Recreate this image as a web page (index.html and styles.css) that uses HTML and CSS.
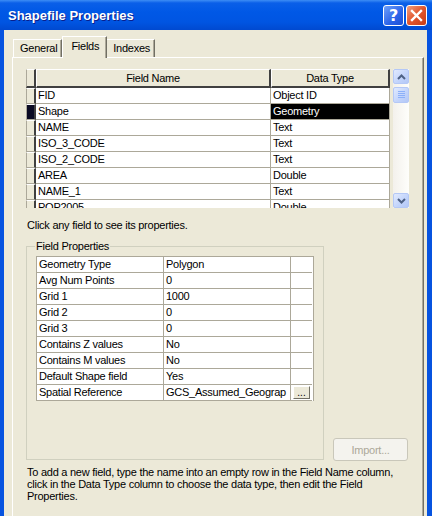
FILE: index.html
```html
<!DOCTYPE html>
<html lang="en">
<head>
<meta charset="UTF-8">
<title>Shapefile Properties</title>
<link rel="stylesheet" href="styles.css">
</head>
<body>
<div class="window">
  <div class="titlebar">
    <span class="title">Shapefile Properties</span>
    <div class="caption-btns">
      <span class="cbtn help">?</span>
      <span class="cbtn close">
        <svg width="13" height="13" viewBox="0 0 13 13"><path d="M2 2 L11 11 M11 2 L2 11" stroke="#fff" stroke-width="2.4" stroke-linecap="square"/></svg>
      </span>
    </div>
  </div>
  <div class="client">
    <div class="tabs">
      <span class="tab">General</span>
      <span class="tab active">Fields</span>
      <span class="tab">Indexes</span>
    </div>
    <div class="panel">
      <div class="fields">
        <div class="grid">
          <div class="grow head">
            <span class="rh"></span>
            <span class="hc name">Field Name</span>
            <span class="hc type">Data Type</span>
          </div>
          <div class="grow"><span class="rh"></span><span class="c name">FID</span><span class="c type">Object ID</span></div>
          <div class="grow sel"><span class="rh"></span><span class="c name">Shape</span><span class="c type">Geometry</span></div>
          <div class="grow"><span class="rh"></span><span class="c name">NAME</span><span class="c type">Text</span></div>
          <div class="grow"><span class="rh"></span><span class="c name">ISO_3_CODE</span><span class="c type">Text</span></div>
          <div class="grow"><span class="rh"></span><span class="c name">ISO_2_CODE</span><span class="c type">Text</span></div>
          <div class="grow"><span class="rh"></span><span class="c name">AREA</span><span class="c type">Double</span></div>
          <div class="grow"><span class="rh"></span><span class="c name">NAME_1</span><span class="c type">Text</span></div>
          <div class="grow"><span class="rh"></span><span class="c name">POP2005</span><span class="c type">Double</span></div>
        </div>
        <div class="vscroll">
          <span class="sbtn">
            <svg width="9" height="6" viewBox="0 0 9 6"><path d="M1 5 L4.5 1.5 L8 5" fill="none" stroke="#4D6185" stroke-width="2"/></svg>
          </span>
          <span class="thumb">
            <svg width="7" height="8" viewBox="0 0 7 8"><path d="M0 0.5H7M0 2.5H7M0 4.5H7M0 6.5H7" stroke="#8CB0F8" stroke-width="1"/></svg>
          </span>
          <span class="track"></span>
          <span class="sbtn">
            <svg width="9" height="6" viewBox="0 0 9 6"><path d="M1 1 L4.5 4.5 L8 1" fill="none" stroke="#4D6185" stroke-width="2"/></svg>
          </span>
        </div>
      </div>
      <p class="hint">Click any field to see its properties.</p>
      <div class="props-row">
        <fieldset class="group">
          <legend>Field Properties</legend>
          <div class="props">
            <div class="prow"><span class="pc pname">Geometry Type</span><span class="pc pval">Polygon</span><span class="pc pbtn"></span></div>
            <div class="prow"><span class="pc pname">Avg Num Points</span><span class="pc pval">0</span><span class="pc pbtn"></span></div>
            <div class="prow"><span class="pc pname">Grid 1</span><span class="pc pval">1000</span><span class="pc pbtn"></span></div>
            <div class="prow"><span class="pc pname">Grid 2</span><span class="pc pval">0</span><span class="pc pbtn"></span></div>
            <div class="prow"><span class="pc pname">Grid 3</span><span class="pc pval">0</span><span class="pc pbtn"></span></div>
            <div class="prow"><span class="pc pname">Contains Z values</span><span class="pc pval">No</span><span class="pc pbtn"></span></div>
            <div class="prow"><span class="pc pname">Contains M values</span><span class="pc pval">No</span><span class="pc pbtn"></span></div>
            <div class="prow"><span class="pc pname">Default Shape field</span><span class="pc pval">Yes</span><span class="pc pbtn"></span></div>
            <div class="prow"><span class="pc pname">Spatial Reference</span><span class="pc pval">GCS_Assumed_Geograp</span><span class="pc pbtn"><span class="dots">...</span></span></div>
          </div>
        </fieldset>
        <button class="import" disabled>Import...</button>
      </div>
      <p class="note">To add a new field, type the name into an empty row in the Field Name column, click in the Data Type column to choose the data type, then edit the Field Properties.</p>
    </div>
  </div>
</div>
</body>
</html>
```

FILE: styles.css
```css
body { margin: 0; font-family: "Liberation Sans", Arial, sans-serif; font-size: 11px; letter-spacing: -0.25px; color: #000; }

.window { width: 432px; height: 516px; display: flex; flex-direction: column; background: #0653E0; overflow: hidden; }

.titlebar { height: 30px; flex: none; display: flex; align-items: center; justify-content: space-between; padding: 0 5px 0 8px;
  background: linear-gradient(#3D8DF5 0, #0A5FE8 3px, #0058E6 12px, #0055E2 22px, #0049D0 30px); }
.title { color: #fff; font-weight: bold; font-size: 13px; letter-spacing: 0; text-shadow: 1px 1px 0 #0A1E8C; padding-top: 1px; }
.caption-btns { display: flex; gap: 2px; padding-top: 1px; }
.cbtn { width: 19px; height: 19px; border: 1px solid #fff; border-radius: 3px; display: flex; align-items: center; justify-content: center; }
.help { background: linear-gradient(135deg, #6FA0FA, #2A63E8 60%, #1E4FD5); color: #fff; font: bold 16px "DejaVu Sans", sans-serif; }
.close { background: linear-gradient(135deg, #F0A080, #E2552C 50%, #C63C16); }

.client { flex: 1; background: #ECE9D8; margin: 0 5px 0 4px; padding: 6px 3px 0 8px; display: flex; flex-direction: column; }

.tabs { display: flex; align-items: flex-end; height: 21px; padding-left: 1px; }
.tab { height: 17px; padding: 0 4px 0 6px; line-height: 17px; border: 1px solid #fff; border-bottom: none; border-right: 1px solid #716F64;
  box-shadow: inset -1px 0 0 #ACA899; background: #ECE9D8; }
.tab.active { height: 21px; line-height: 19px; margin: 0 -1px -1px 0; padding: 0 7px 0 8px; position: relative; z-index: 1; }

.panel { flex: 1; border: 1px solid #fff; border-right-color: #716F64; border-bottom: none; box-shadow: inset -1px 0 0 #ACA899;
  padding: 11px 0 0 13px; }

.fields { display: flex; gap: 3px; height: 139px; }
.grid { width: 364px; height: 139px; overflow: hidden; background: #fff; }
.grow { display: flex; height: 16px; }
.rh { width: 10px; flex: none; box-sizing: border-box; background: #ECE9D8; border-left: 1px solid #ACA899; border-top: 1px solid #fff;
  border-right: 2px solid #404040; border-bottom: 1px solid #ACA899; }
.grow.head { height: 19px; }
.grow.head .rh { border-bottom: 2px solid #404040; }
.hc { box-sizing: border-box; background: #ECE9D8; border-top: 1px solid #fff; border-left: 1px solid #fff; border-right: 2px solid #404040;
  border-bottom: 2px solid #404040; text-align: center; line-height: 16px; }
.c { box-sizing: border-box; border-right: 1px solid #ACA899; border-bottom: 1px solid #ACA899; padding-left: 2px; line-height: 15px; white-space: nowrap; }
.name { width: 235px; }
.type { width: 119px; }
.sel .rh { background: #0B0B24; }
.sel .type { background: #000; color: #fff; }

.vscroll { width: 16px; display: flex; flex-direction: column; background: linear-gradient(90deg, #F3F1EC, #FEFEFB); }
.sbtn, .thumb { box-sizing: border-box; height: 15px; border: 1px solid #B4C8F6; border-radius: 2px; display: flex; align-items: center; justify-content: center;
  background: linear-gradient(135deg, #E1EAFE, #C1D3FB 60%, #B4C8F6); }
.thumb { height: 16px; margin-top: 3px; }
.track { flex: 1; }

.hint { margin: 11px 0 0 1px; line-height: 13px; }

.props-row { display: flex; align-items: flex-end; margin-top: 8px; }
.group { width: 298px; height: 220px; box-sizing: border-box; margin: 0; padding: 3px 0 0 9px; border: 1px solid #D0D0BF; border-radius: 0; }
.group legend { padding: 0 1px; margin-left: -1px; line-height: 13px; }
.props { width: 276px; border: 1px solid #ACA899; border-bottom: none; background: #fff; }
.prow { display: flex; height: 16px; }
.pc { box-sizing: border-box; border-bottom: 1px solid #ACA899; border-right: 1px solid #ACA899; padding-left: 2px; line-height: 15px; white-space: nowrap; overflow: hidden; }
.pname { width: 127px; }
.pval { width: 127px; }
.pbtn { width: 21px; border-right: none; padding: 1px 0 0 2px; }
.dots { display: block; width: 17px; height: 13px; box-sizing: border-box; background: #ECE9D8; border: 1px solid #fff; border-right-color: #716F64;
  border-bottom-color: #716F64; line-height: 11px; text-align: center; font-size: 10px; letter-spacing: 0; }

.import { width: 75px; height: 23px; margin: 0 0 -1px 9px; padding: 0; font: 11px "Liberation Sans", Arial, sans-serif; letter-spacing: -0.25px; color: #ACA899;
  background: #F4F3EE; border: 1px solid #C9C7BA; border-radius: 3px; }

.note { margin: 6px 12px 0 1px; line-height: 12px; }
```
